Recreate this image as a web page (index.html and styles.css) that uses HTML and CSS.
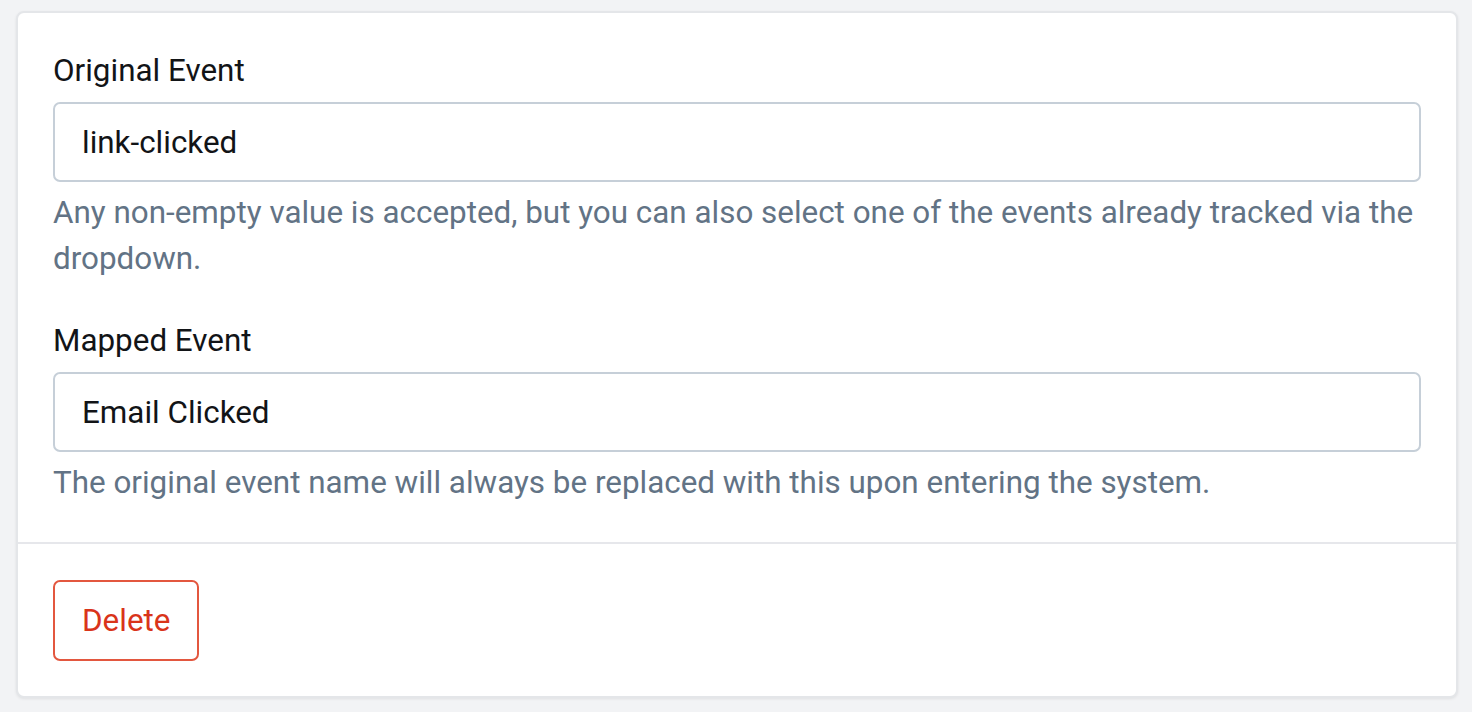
FILE: index.html
```html
<!DOCTYPE html>
<html lang="en">
<head>
<meta charset="utf-8">
<title>Event mapping</title>
<link rel="stylesheet" href="styles.css">
</head>
<body>
  <div class="card">
    <div class="card-body">
      <div class="field">
        <label class="label" for="orig">Original Event</label>
        <input class="input" id="orig" type="text" value="link-clicked">
        <p class="help">Any non-empty value is accepted, but you can also select one of the events already tracked via the dropdown.</p>
      </div>
      <div class="field">
        <label class="label" for="mapped">Mapped Event</label>
        <input class="input" id="mapped" type="text" value="Email Clicked">
        <p class="help">The original event name will always be replaced with this upon entering the system.</p>
      </div>
    </div>
    <div class="card-footer">
      <button class="btn-delete" type="button">Delete</button>
    </div>
  </div>
</body>
</html>
```

FILE: styles.css
```css
* { box-sizing: border-box; }
html, body { margin: 0; padding: 0; }
body {
  background: #f2f3f5;
  font-family: Roboto, "Liberation Sans", sans-serif;
  padding: 11px 14px 14px 16px;
}
.card {
  width: 1442px;
  background: #ffffff;
  border: 2px solid #e4e6e9;
  border-radius: 8px;
  box-shadow: 0 1px 3px rgba(0, 0, 0, 0.08);
}
.card-body {
  padding: 36px 35px 36px 35px;
}
.field + .field {
  margin-top: 38px;
}
.label {
  display: block;
  font-size: 31.4px;
  line-height: 43px;
  color: #121417;
  margin-bottom: 10px;
}
.input {
  display: block;
  width: 100%;
  height: 80px;
  border: 2px solid #c6cfd8;
  border-radius: 7px;
  padding: 0 27px;
  font-family: Roboto, "Liberation Sans", sans-serif;
  font-size: 31.4px;
  color: #121417;
  background: #ffffff;
  outline: none;
}
.help {
  margin: 8px 0 0 0;
  font-size: 31.4px;
  line-height: 45.5px;
  color: #627385;
}
.card-footer {
  border-top: 2px solid #e6e7eb;
  padding: 36px 35px 35px 35px;
}
.btn-delete {
  display: block;
  height: 81px;
  padding: 0 27px;
  background: #ffffff;
  border: 2px solid #e3573f;
  border-radius: 7px;
  font-family: Roboto, "Liberation Sans", sans-serif;
  font-size: 31.4px;
  color: #d9341a;
  cursor: pointer;
}
```
